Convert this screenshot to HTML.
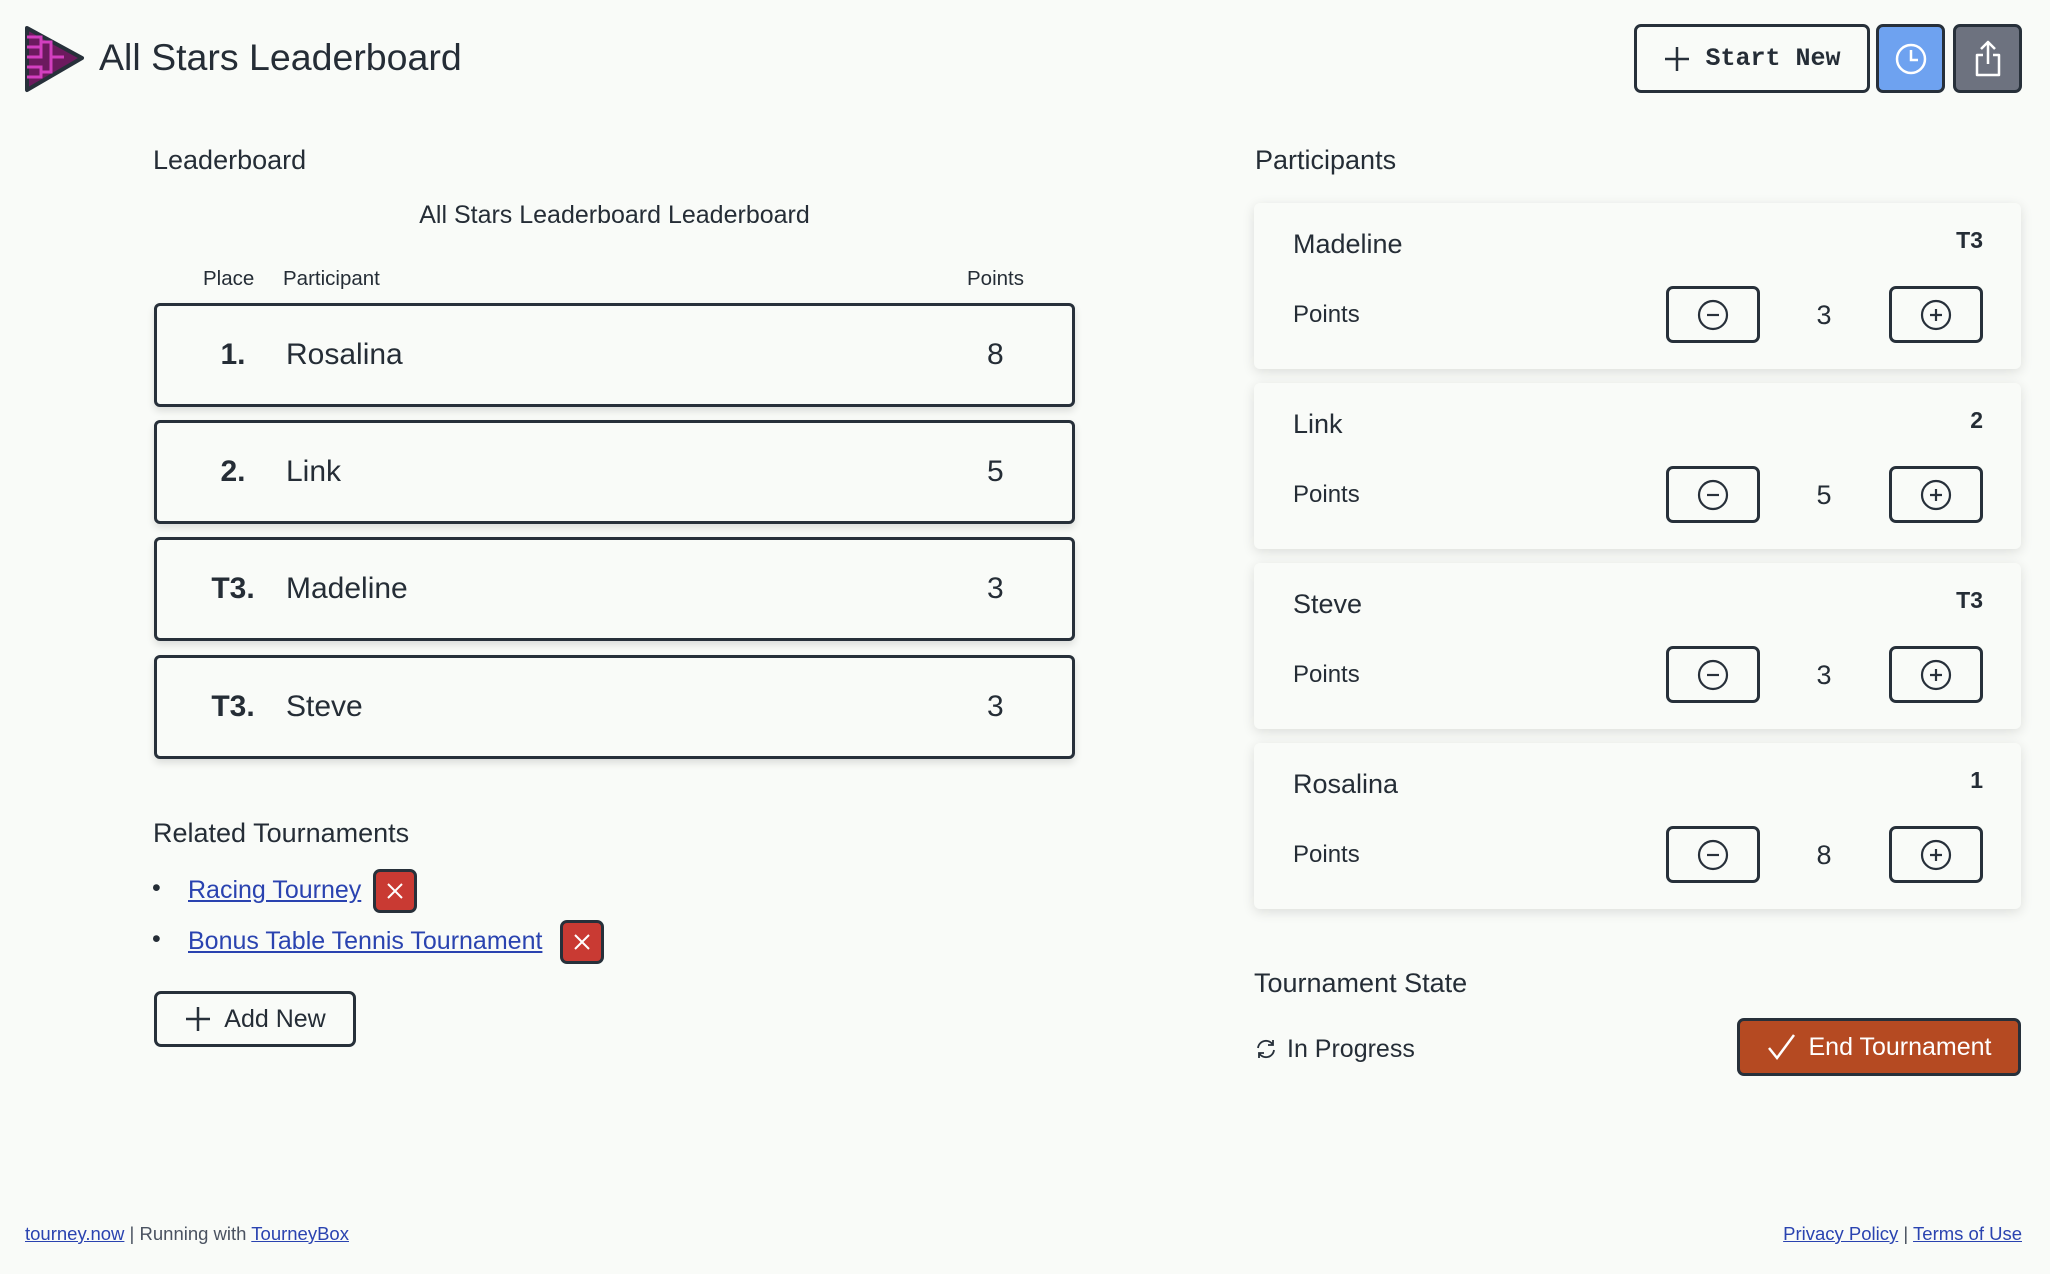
<!DOCTYPE html>
<html><head><meta charset="utf-8"><style>
*{box-sizing:border-box;margin:0;padding:0}
body{width:2050px;height:1274px;background:#f9fbf8;font-family:"Liberation Sans",sans-serif;color:#252d36;position:relative;overflow:hidden}
.a{position:absolute}
.btn{position:absolute;border:3px solid #27303a;border-radius:7px;display:flex;align-items:center;justify-content:center}
.row{position:absolute;left:154px;width:921px;height:104px;border:3px solid #27303a;border-radius:6px;box-shadow:0 4px 8px rgba(0,0,0,.12);background:#f9fbf8}
.row .p{position:absolute;left:26px;width:100px;text-align:center;top:32px;font-size:30px;font-weight:bold}
.row .n{position:absolute;left:129px;top:32px;font-size:30px}
.row .v{position:absolute;left:830px;top:32px;font-size:30px}
.card{position:absolute;left:1254px;width:767px;height:166px;background:#f9fbf8;border-radius:6px;box-shadow:0 3px 12px rgba(0,0,0,.12)}
.card .n{position:absolute;left:39px;top:26px;font-size:27px}
.card .r{position:absolute;right:38px;top:24px;font-size:23px;font-weight:bold}
.card .l{position:absolute;left:39px;top:98px;font-size:24px}
.card .v{position:absolute;left:560px;width:20px;text-align:center;top:97px;font-size:27px}
.card .btn{top:83px;width:94px;height:57px}
h2{position:absolute;font-weight:normal;font-size:27px}
a{color:#2a43b0;text-decoration:underline}
</style></head><body>
<svg class="a" style="left:24px;top:25px" width="62" height="68" viewBox="0 0 62 68">
<path d="M3 3 L58 33 L3 65 Z" fill="#6c1a5e" stroke="#27303a" stroke-width="4" stroke-linejoin="round"/>
<path d="M3 12 H17 V22 H3 M3 22 H17 V32 H3 M17 17 H27 V32 H40 M3 42 H17 V52 H3 M17 47 H27 V32 M3 32 H17" fill="none" stroke="#d23fbf" stroke-width="3"/>
</svg>
<div class="a" style="left:99px;top:36px;font-size:37.5px">All Stars Leaderboard</div>
<div class="btn" style="left:1634px;top:24px;width:236px;height:69px;font-family:'Liberation Mono',monospace;font-weight:bold;font-size:25px">
<svg width="28" height="28" viewBox="0 0 28 28" style="margin-right:14px"><path d="M14 2V26M2 14H26" stroke="#27303a" stroke-width="2.5"/></svg>Start New</div>
<div class="btn" style="left:1876px;top:24px;width:69px;height:69px;background:#6ea2f0">
<svg width="34" height="34" viewBox="0 0 34 34"><circle cx="17" cy="17" r="14" fill="none" stroke="#fff" stroke-width="2.5"/><path d="M17 8V18H24" fill="none" stroke="#fff" stroke-width="2.5"/></svg></div>
<div class="btn" style="left:1953px;top:24px;width:69px;height:69px;background:#6d727f">
<svg width="30" height="38" viewBox="0 0 30 38"><path d="M15 2V24M8 9L15 2L22 9M10 15H4V35H26V15H20" fill="none" stroke="#fff" stroke-width="2.5" stroke-linejoin="round"/></svg></div>

<h2 style="left:153px;top:145px">Leaderboard</h2>
<div class="a" style="left:154px;width:921px;text-align:center;top:201px;font-size:25px">All Stars Leaderboard Leaderboard</div>
<div class="a" style="left:203px;top:267px;font-size:20.5px">Place</div>
<div class="a" style="left:283px;top:267px;font-size:20.5px">Participant</div>
<div class="a" style="left:967px;top:267px;font-size:20.5px">Points</div>
<div class="row" style="top:303px"><span class="p">1.</span><span class="n">Rosalina</span><span class="v">8</span></div>
<div class="row" style="top:420px"><span class="p">2.</span><span class="n">Link</span><span class="v">5</span></div>
<div class="row" style="top:537px"><span class="p">T3.</span><span class="n">Madeline</span><span class="v">3</span></div>
<div class="row" style="top:655px"><span class="p">T3.</span><span class="n">Steve</span><span class="v">3</span></div>

<h2 style="left:153px;top:818px">Related Tournaments</h2>
<div class="a" style="left:152px;top:874px;font-size:25px">•</div>
<a class="a" style="left:188px;top:876px;font-size:25px">Racing Tourney</a>
<div class="btn" style="left:373px;top:869px;width:44px;height:44px;background:#c93a33"><svg width="18" height="18" viewBox="0 0 18 18"><path d="M2 2L16 16M16 2L2 16" stroke="#fff" stroke-width="2"/></svg></div>
<div class="a" style="left:152px;top:925px;font-size:25px">•</div>
<a class="a" style="left:188px;top:927px;font-size:25px">Bonus Table Tennis Tournament</a>
<div class="btn" style="left:560px;top:920px;width:44px;height:44px;background:#c93a33"><svg width="18" height="18" viewBox="0 0 18 18"><path d="M2 2L16 16M16 2L2 16" stroke="#fff" stroke-width="2"/></svg></div>
<div class="btn" style="left:154px;top:991px;width:202px;height:56px;font-size:25px"><svg width="28" height="28" viewBox="0 0 28 28" style="margin-right:12px"><path d="M14 2V26M2 14H26" stroke="#27303a" stroke-width="2.5"/></svg>Add New</div>

<h2 style="left:1255px;top:145px">Participants</h2>
<div class="card" style="top:203px"><span class="n">Madeline</span><span class="r">T3</span><span class="l">Points</span>
<div class="btn" style="left:412px"><svg width="34" height="34"><circle cx="17" cy="17" r="14" fill="none" stroke="#27303a" stroke-width="2.2"/><path d="M11 17H23" stroke="#27303a" stroke-width="2.2"/></svg></div><span class="v">3</span>
<div class="btn" style="left:635px"><svg width="34" height="34"><circle cx="17" cy="17" r="14" fill="none" stroke="#27303a" stroke-width="2.2"/><path d="M11 17H23M17 11V23" stroke="#27303a" stroke-width="2.2"/></svg></div></div>
<div class="card" style="top:383px"><span class="n">Link</span><span class="r">2</span><span class="l">Points</span>
<div class="btn" style="left:412px"><svg width="34" height="34"><circle cx="17" cy="17" r="14" fill="none" stroke="#27303a" stroke-width="2.2"/><path d="M11 17H23" stroke="#27303a" stroke-width="2.2"/></svg></div><span class="v">5</span>
<div class="btn" style="left:635px"><svg width="34" height="34"><circle cx="17" cy="17" r="14" fill="none" stroke="#27303a" stroke-width="2.2"/><path d="M11 17H23M17 11V23" stroke="#27303a" stroke-width="2.2"/></svg></div></div>
<div class="card" style="top:563px"><span class="n">Steve</span><span class="r">T3</span><span class="l">Points</span>
<div class="btn" style="left:412px"><svg width="34" height="34"><circle cx="17" cy="17" r="14" fill="none" stroke="#27303a" stroke-width="2.2"/><path d="M11 17H23" stroke="#27303a" stroke-width="2.2"/></svg></div><span class="v">3</span>
<div class="btn" style="left:635px"><svg width="34" height="34"><circle cx="17" cy="17" r="14" fill="none" stroke="#27303a" stroke-width="2.2"/><path d="M11 17H23M17 11V23" stroke="#27303a" stroke-width="2.2"/></svg></div></div>
<div class="card" style="top:743px"><span class="n">Rosalina</span><span class="r">1</span><span class="l">Points</span>
<div class="btn" style="left:412px"><svg width="34" height="34"><circle cx="17" cy="17" r="14" fill="none" stroke="#27303a" stroke-width="2.2"/><path d="M11 17H23" stroke="#27303a" stroke-width="2.2"/></svg></div><span class="v">8</span>
<div class="btn" style="left:635px"><svg width="34" height="34"><circle cx="17" cy="17" r="14" fill="none" stroke="#27303a" stroke-width="2.2"/><path d="M11 17H23M17 11V23" stroke="#27303a" stroke-width="2.2"/></svg></div></div>

<h2 style="left:1254px;top:968px">Tournament State</h2>
<svg class="a" style="left:1255px;top:1038px" width="22" height="22" viewBox="0 0 22 22"><path d="M3 10A8 8 0 0 1 18 7M18 2V7H13M19 12A8 8 0 0 1 4 15M4 20V15H9" fill="none" stroke="#27303a" stroke-width="1.8"/></svg>
<div class="a" style="left:1287px;top:1035px;font-size:25px">In Progress</div>
<div class="btn" style="left:1737px;top:1018px;width:284px;height:58px;background:#b54a22;color:#fff;font-size:25px"><svg width="30" height="28" viewBox="0 0 30 28" style="margin-right:12px"><path d="M2 15L10 25L27 2" fill="none" stroke="#fff" stroke-width="2.5"/></svg>End Tournament</div>

<div class="a" style="left:25px;top:1223px;font-size:18.5px;color:#4a5260"><a>tourney.now</a> | Running with <a>TourneyBox</a></div>
<div class="a" style="right:28px;top:1223px;font-size:18.5px;color:#4a5260"><a>Privacy Policy</a> | <a>Terms of Use</a></div>
</body></html>
